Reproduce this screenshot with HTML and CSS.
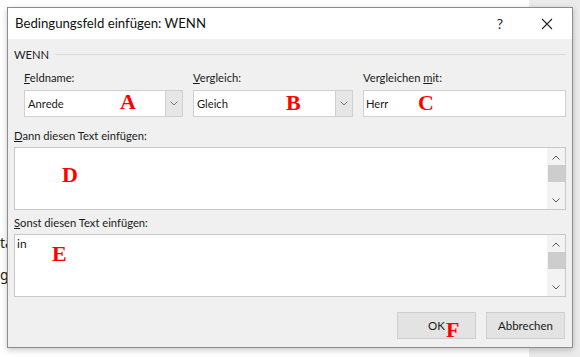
FILE: index.html
```html
<!DOCTYPE html>
<html lang="de">
<head>
<meta charset="utf-8">
<title>Bedingungsfeld einfügen: WENN</title>
<link rel="stylesheet" href="styles.css">
</head>
<body>
<div class="desktop">
  <div class="side-strip"></div>
  <span class="bg-text bg-ta">ta</span>
  <span class="bg-text bg-ge">ge</span>

  <div class="dialog">
    <div class="titlebar">
      <span class="title">Bedingungsfeld einfügen: WENN</span>
      <span class="tb-help">?</span>
      <span class="tb-close">
        <svg width="12" height="12" viewBox="0 0 12 12"><path d="M1 1 L11 11 M11 1 L1 11" stroke="#222" stroke-width="1.1" fill="none"/></svg>
      </span>
    </div>
    <div class="body">
      <div class="group-head"><span>WENN</span><span class="group-line"></span></div>
      <div class="fields">
        <div class="field f-a">
          <label><u>F</u>eldname:</label>
          <div class="combo">
            <span class="combo-val">Anrede</span>
            <span class="combo-btn"><svg width="8" height="5" viewBox="0 0 8 5"><path d="M0.5 0.5 L4 4 L7.5 0.5" stroke="#777" stroke-width="1" fill="none"/></svg></span>
          </div>
        </div>
        <div class="field f-b">
          <label><u>V</u>ergleich:</label>
          <div class="combo">
            <span class="combo-val">Gleich</span>
            <span class="combo-btn"><svg width="8" height="5" viewBox="0 0 8 5"><path d="M0.5 0.5 L4 4 L7.5 0.5" stroke="#777" stroke-width="1" fill="none"/></svg></span>
          </div>
        </div>
        <div class="field f-c">
          <label>Vergleichen <u>m</u>it:</label>
          <div class="textbox">Herr</div>
        </div>
      </div>
      <label class="area-label"><u>D</u>ann diesen Text einfügen:</label>
      <div class="textarea">
        <div class="area-text"></div>
        <div class="scrollbar">
          <svg class="sb-up" width="8" height="5" viewBox="0 0 8 5"><path d="M0.5 4.5 L4 1 L7.5 4.5" stroke="#555" stroke-width="1" fill="none"/></svg>
          <span class="thumb"></span>
          <svg class="sb-down" width="8" height="5" viewBox="0 0 8 5"><path d="M0.5 0.5 L4 4 L7.5 0.5" stroke="#555" stroke-width="1" fill="none"/></svg>
        </div>
      </div>
      <label class="area-label"><u>S</u>onst diesen Text einfügen:</label>
      <div class="textarea">
        <div class="area-text">in</div>
        <div class="scrollbar">
          <svg class="sb-up" width="8" height="5" viewBox="0 0 8 5"><path d="M0.5 4.5 L4 1 L7.5 4.5" stroke="#555" stroke-width="1" fill="none"/></svg>
          <span class="thumb"></span>
          <svg class="sb-down" width="8" height="5" viewBox="0 0 8 5"><path d="M0.5 0.5 L4 4 L7.5 0.5" stroke="#555" stroke-width="1" fill="none"/></svg>
        </div>
      </div>
      <div class="buttons">
        <button class="btn">OK</button>
        <button class="btn">Abbrechen</button>
      </div>
    </div>

    <span class="mark m-a">A</span>
    <span class="mark m-b">B</span>
    <span class="mark m-c">C</span>
    <span class="mark m-d">D</span>
    <span class="mark m-e">E</span>
    <span class="mark m-f">F</span>
  </div>
</div>
</body>
</html>
```

FILE: styles.css
```css
* { box-sizing: border-box; }
html, body { margin: 0; padding: 0; }
body {
  width: 580px;
  height: 357px;
  overflow: hidden;
  background: #fff;
  font-family: Lato, "Noto Sans", sans-serif;
  color: #1a1a1a;
}
.desktop {
  position: relative;
  width: 580px;
  height: 357px;
}
.side-strip {
  position: absolute;
  left: 529px;
  top: 0;
  width: 51px;
  height: 357px;
  background: #ebebeb;
}
.bg-text {
  position: absolute;
  left: 0;
  font-family: "Noto Sans", sans-serif;
  font-size: 14px;
  color: #222;
  line-height: 16px;
}
.bg-ta { top: 235px; }
.bg-ge { top: 267px; }

.dialog {
  position: absolute;
  left: 7px;
  top: 7px;
  width: 566px;
  height: 341px;
  border: 1px solid #8c8c8c;
  background: #f0f0f0;
  box-shadow: 0 2px 6px rgba(0,0,0,0.22);
  display: flex;
  flex-direction: column;
}
.titlebar {
  height: 31px;
  background: #fff;
  display: flex;
  align-items: center;
  padding-left: 7px;
  flex: none;
}
.title {
  font-size: 13.2px;
  color: #111;
  flex: 1;
  padding-bottom: 1px;
}
.tb-help {
  font-size: 14px;
  color: #222;
  width: 14px;
  margin-right: 34px;
  text-align: center;
}
.tb-close {
  display: flex;
  margin-right: 19px;
}
.body {
  flex: 1;
  display: flex;
  flex-direction: column;
  padding: 0 6px 0 6px;
  font-size: 11.2px;
}
.group-head {
  margin-top: 8px;
  height: 16px;
  line-height: 16px;
  display: flex;
  align-items: center;
  gap: 6px;
}
.group-line {
  flex: 1;
  height: 1px;
  background: #dcdcdc;
  margin-top: -1px;
}
.fields {
  display: flex;
  padding-left: 10px;
  margin-top: 7px;
}
.field {
  display: flex;
  flex-direction: column;
}
.field label { line-height: 16px; height: 16px; }
.f-a { width: 159px; margin-right: 10px; }
.f-b { width: 160px; margin-right: 10px; }
.f-c { flex: 1; }
.combo, .textbox {
  margin-top: 4px;
  height: 27px;
  background: #fff;
  border: 1px solid #d0d0d0;
  display: flex;
  align-items: center;
}
.combo-val { flex: 1; padding-left: 3px; }
.combo-btn {
  width: 17px;
  height: 100%;
  background: #e6e6e6;
  border-left: 1px solid #d0d0d0;
  display: flex;
  align-items: center;
  justify-content: center;
}
.textbox { padding-left: 2px; }
.area-label {
  display: block;
  line-height: 16px;
  height: 16px;
}
.fields + .area-label { margin-top: 11px; }
.textarea + .area-label { margin-top: 5px; }
.textarea {
  margin-top: 3px;
  height: 63px;
  background: #fff;
  border: 1px solid #c8c8c8;
  display: flex;
}
.area-text {
  flex: 1;
  padding: 1px 2px;
  font-size: 12px;
  line-height: 16px;
}
.scrollbar {
  width: 18px;
  background: #f3f3f3;
  display: flex;
  flex-direction: column;
  align-items: center;
}
.sb-up { margin-top: 7px; }
.thumb {
  width: 17px;
  height: 17px;
  background: #cdcdcd;
  margin-top: 5px;
}
.sb-down { margin-top: auto; margin-bottom: 6px; }
.buttons {
  margin-top: 15px;
  display: flex;
  justify-content: flex-end;
  gap: 10px;
  padding-right: 1px;
}
.btn {
  width: 79px;
  height: 27px;
  background: #e3e3e3;
  border: 1px solid #cfcfcf;
  font-family: inherit;
  font-size: 11.5px;
  color: #1a1a1a;
  padding: 0;
}
.mark {
  position: absolute;
  font-family: "Liberation Serif", serif;
  font-weight: bold;
  font-size: 22px;
  line-height: 22px;
  color: #f00;
}
.m-a { left: 112px; top: 83px; }
.m-b { left: 278px; top: 84px; }
.m-c { left: 410px; top: 84px; }
.m-d { left: 54px; top: 156px; }
.m-e { left: 44px; top: 235px; }
.m-f { left: 438px; top: 311px; }
```
